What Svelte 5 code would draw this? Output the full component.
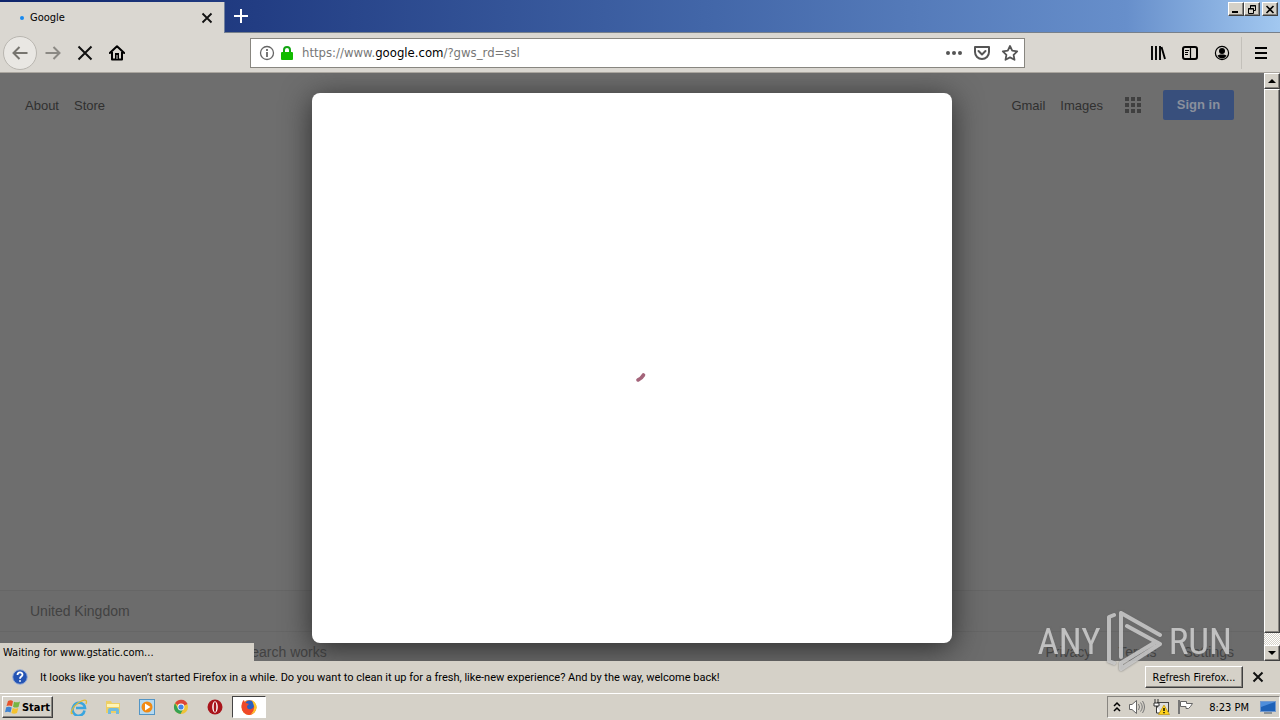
<script>
  const quick = ['Internet Explorer', 'File Explorer', 'Media Player', 'Chrome', 'Opera', 'Firefox'];
  const dots = [0, 1, 2, 3, 4, 5, 6, 7, 8];
</script>

<svelte:head><title>Google</title></svelte:head>

<div class="screen">
  <header class="titlebar">
    <div class="tab">
      <span class="loading"></span>
      <span class="tabname">Google</span>
      <button class="plain close" aria-label="Close tab">
        <svg width="12" height="12" viewBox="0 0 12 12"><path d="M1.5 1.5l9 9M10.500 1.500l-9 9" stroke="#111" stroke-width="1.800" /></svg>
      </button>
    </div>
    <button class="plain newtab" aria-label="New tab">
      <svg width="14" height="14" viewBox="0 0 14 14"><path d="M7 0v14M0 7h14" stroke="#fff" stroke-width="2" /></svg>
    </button>
    <div class="wincontrols">
      <button class="raised win" aria-label="Minimize"><svg width="10" height="9" viewBox="0 0 10 9"><path d="M1 7h6" stroke="#000" stroke-width="2" /></svg></button>
      <button class="raised win" aria-label="Restore"><svg width="10" height="9" viewBox="0 0 10 9"><path d="M3.500 3V.5h5v5H7M3 1h6M1.500 3.500h5v5h-5zM1 4h6" fill="none" stroke="#000" /></svg></button>
      <button class="raised win last" aria-label="Close"><svg width="10" height="9" viewBox="0 0 10 9"><path d="M1.500 1l7 7M8.500 1l-7 7" stroke="#000" stroke-width="1.600" /></svg></button>
    </div>
  </header>

  <nav class="toolbar" aria-label="Browser">
    <div class="navbuttons">
      <button class="plain back" aria-label="Back"><svg width="16" height="16" viewBox="0 0 16 16"><path d="M15.500 8H1.500M7.500 2L1.500 8l6 6" fill="none" stroke="#77756f" stroke-width="2" /></svg></button>
      <button class="plain tool" aria-label="Forward"><svg width="16" height="16" viewBox="0 0 16 16"><path d="M.5 8h14M8.500 2l6 6-6 6" fill="none" stroke="#8b8984" stroke-width="2" /></svg></button>
      <button class="plain tool" aria-label="Stop"><svg width="16" height="16" viewBox="0 0 16 16"><path d="M1.500 1.500l13 13M14.500 1.500l-13 13" stroke="#111" stroke-width="2" /></svg></button>
      <button class="plain tool" aria-label="Home"><svg width="16" height="16" viewBox="0 0 16 16"><path d="M.8 8L8 1.200 15.200 8M3 7v7.500h10V7" fill="none" stroke="#000" stroke-width="2" stroke-linejoin="round" stroke-linecap="round" /><path d="M6 8h4v6H6z" /><path d="M8 10v4" stroke="#dbd8d1" stroke-width="1" /></svg></button>
    </div>
    <div class="urlbar">
      <svg width="16" height="16" viewBox="0 0 16 16"><circle cx="8" cy="8" r="6.500" fill="none" stroke="#666" stroke-width="1.300" /><path d="M8 7v5M8 4v2" stroke="#555" stroke-width="1.600" /></svg>
      <svg class="lock" width="14" height="16" viewBox="0 0 14 16"><path d="M4 8V5a3 3 0 016 0v3" fill="none" stroke="#12a512" stroke-width="2" /><rect x="1" y="7" width="12" height="8" rx="1" fill="#12bc00" /></svg>
      <div class="url" role="textbox" aria-label="Address" tabindex="0" contenteditable="true">https://www.<b>google.com</b>/?gws_rd=ssl</div>
      <button class="plain" aria-label="Page actions"><svg width="18" height="18" viewBox="0 0 18 18" fill="#555"><circle cx="3" cy="9" r="2" /><circle cx="9" cy="9" r="2" /><circle cx="15" cy="9" r="2" /></svg></button>
      <button class="plain" aria-label="Save to Pocket"><svg width="18" height="18" viewBox="0 0 18 18" fill="none" stroke="#555" stroke-width="2" stroke-linejoin="round" stroke-linecap="round"><path d="M2 3h14v5a7 7 0 01-14 0z" /><path d="M5.500 7L9 10.500 12.500 7" /></svg></button>
      <button class="plain" aria-label="Bookmark"><svg width="18" height="18" viewBox="0 0 18 18"><path d="M9 2l2.200 4.600 5 .7-3.600 3.500.9 5L9 13.400l-4.500 2.400.9-5L1.800 7.300l5-.7z" fill="none" stroke="#555" stroke-width="1.800" stroke-linejoin="round" /></svg></button>
    </div>
    <div class="rightbuttons">
      <button class="plain tool" aria-label="Library"><svg width="16" height="16" viewBox="0 0 16 16"><path d="M2 1v14M6 1v14M10 1v14M11.500 2l3.500 12" stroke="#000" stroke-width="1.900" /></svg></button>
      <button class="plain tool" aria-label="Sidebar"><svg width="16" height="16" viewBox="0 0 16 16"><rect x="1" y="2" width="14" height="12" rx="2" fill="none" stroke="#000" stroke-width="2" /><path d="M8.500 2v12" stroke="#000" stroke-width="1.200" /><path d="M3 5.500h4M3 7.500h3M3 9.500h3" stroke="#000" /></svg></button>
      <button class="plain tool" aria-label="Account"><svg width="16" height="16" viewBox="0 0 16 16"><circle cx="8" cy="8" r="6.600" fill="none" stroke="#000" stroke-width="1.200" /><circle cx="8" cy="6" r="3" /><path d="M3.500 10.500c1-1.500 8-1.500 9 0-1 2-2.500 3-4.500 3s-3.500-1-4.500-3z" /></svg></button>
      <span class="divider"></span>
      <button class="plain tool" aria-label="Menu"><svg width="14" height="14" viewBox="0 0 14 14"><path d="M1 2h12M1 7h12M1 12h12" stroke="#000" stroke-width="2" /></svg></button>
    </div>
  </nav>

  <div class="viewport">
    <main class="page">
      <div class="top">
        <a href="#about">About</a>
        <a href="#store">Store</a>
        <span class="grow"></span>
        <a href="#gmail">Gmail</a>
        <a href="#images">Images</a>
        <button class="plain apps" aria-label="Google apps">{#each dots as d (d)}<i></i>{/each}</button>
        <a class="signin" href="#signin">Sign in</a>
      </div>
      <footer>
        <div class="country">United Kingdom</div>
        <div class="links">
          <a class="how" href="#how">How Search works</a>
          <span class="grow"></span>
          <a href="#privacy">Privacy</a>
          <a href="#terms">Terms</a>
          <a href="#settings">Settings</a>
        </div>
      </footer>
      <div class="dialog" role="dialog" aria-label="Loading">
        <svg width="12" height="12" viewBox="0 0 12 12"><path d="M3 9Q6.500 7.500 8.500 4" fill="none" stroke="#a4647a" stroke-width="3.600" stroke-linecap="round" /></svg>
      </div>
      <div class="status">Waiting for www.gstatic.com...</div>
    </main>
    <div class="scrollbar">
      <button class="raised arrow" aria-label="Scroll up"><svg width="8" height="4" viewBox="0 0 8 4"><path d="M0 4l4-4 4 4z" /></svg></button>
      <div class="raised thumb"></div>
      <div class="track"></div>
      <button class="raised arrow" aria-label="Scroll down"><svg width="8" height="4" viewBox="0 0 8 4"><path d="M0 0h8L4 4z" /></svg></button>
    </div>
    <div class="watermark">
      <span>ANY</span>
      <svg width="56" height="64" viewBox="0 0 56 64" fill="none" stroke="#d2d2d2" stroke-opacity=".8" stroke-width="4" stroke-linejoin="round" stroke-linecap="round"><path d="M7 6L2 8v44l5 2M53 26L14 4v44M20 17l33 18L14 60v-6l33-20" /></svg>
      <span>RUN</span>
    </div>
  </div>

  <aside class="notice">
    <svg width="16" height="16" viewBox="0 0 16 16"><circle cx="8" cy="8" r="7.300" fill="#2454b4" stroke="#9aaed6" /><path d="M5.500 6c0-3.500 5-3.300 5-.3 0 2-2.500 1.800-2.500 4M8 11.200v1.600" fill="none" stroke="#fff" stroke-width="1.800" /></svg>
    <p>It looks like you haven’t started Firefox in a while. Do you want to clean it up for a fresh, like-new experience? And by the way, welcome back!</p>
    <button class="raised refresh">R<u>e</u>fresh Firefox...</button>
    <button class="plain close" aria-label="Dismiss"><svg width="12" height="12" viewBox="0 0 12 12"><path d="M1.500 1.500l9 9M10.500 1.500l-9 9" stroke="#111" stroke-width="2" /></svg></button>
  </aside>

  <footer class="taskbar">
    <button class="raised start">
      <svg width="16" height="16" viewBox="0 0 16 16"><path d="M3 2q3-1.500 5 .3L7 7.300Q4.500 6 1.500 7z" fill="#e6532b" /><path d="M9 2.700q3 1.400 6-.2L13.500 8q-3 1.300-5.500-.3z" fill="#77b543" /><path d="M1.200 8.200q3-1.200 5.500.3l-1.200 5Q3 12 0 13.200z" fill="#3f83d2" /><path d="M7.700 9q3 1.300 5.600 0L12 14q-3 1.300-5.600 0z" fill="#f5c22e" /></svg>Start
    </button>
    <div class="quick">
      {#each quick as name, i (name)}
        <button class="plain launch" class:active={i === 5} aria-label={name}>
          <svg width="18" height="18" viewBox="0 0 18 18">
            {#if i === 0}
              <path d="M14.500 12.500A6 6 0 113.500 8.500 6 6 0 0115 10H6" fill="none" stroke="#39a5df" stroke-width="2.600" /><path d="M3 15C-1 18 2 9 8 5s10-4 8 1" fill="none" stroke="#e1bb37" stroke-width="1.300" />
            {:else if i === 1}
              <path d="M2 3h5l1 2h8v10H2z" fill="#edcf65" /><path d="M3 6h12v3H3z" fill="#fff4b5" /><path d="M4 16v-4q0-2 2-2h7q2 0 2 2v4h-3v-3H7v3z" fill="#72bbde" />
            {:else if i === 2}
              <rect x="1.500" y="1.500" width="15" height="15" fill="#b5d9f0" stroke="#5395c5" /><circle cx="9" cy="9" r="5.500" fill="#f18a13" /><path d="M7 5.500v7L12.500 9z" fill="#fff" />
            {:else if i === 3}
              <circle cx="9" cy="9" r="7" fill="#efc338" /><path d="M9 9L3 5.300A7 7 0 0115.500 6z" fill="#dc4638" /><path d="M3 5.300A7 7 0 008.500 16l3-5.500H6z" fill="#35a252" /><path d="M9 6h6.500L9 6z" fill="#dc4638" /><circle cx="9" cy="9" r="3.400" fill="#fff" /><circle cx="9" cy="9" r="2.600" fill="#4384e6" />
            {:else if i === 4}
              <circle cx="9" cy="9" r="7.500" fill="#a9141b" /><ellipse cx="9" cy="9" rx="2.800" ry="5.800" fill="#fff" /><ellipse cx="9" cy="9" rx="1.300" ry="5" fill="#a9141b" />
            {:else}
              <circle cx="9" cy="9.500" r="7.500" fill="#f07b1d" /><circle cx="9.500" cy="7.500" r="5" fill="#2b5fc0" /><path d="M1.500 8Q2 3 4 2q0 2 2 3l3 1-2 2q0 4 4 3 3-1 3-4 2 1 1.500 4-1 5-6.500 6-7-1-7.500-9z" fill="#ef4828" /><path d="M12 2q5 3 4.500 8-1 5-5.500 6 4-4 3-8z" fill="#ffc52b" />
            {/if}
          </svg>
        </button>
      {/each}
    </div>
    <div class="tray">
      <svg width="8" height="12" viewBox="0 0 8 12"><path d="M1 5l3-3 3 3M1 10l3-3 3 3" fill="none" stroke="#000" stroke-width="1.500" /></svg>
      <svg width="18" height="16" viewBox="0 0 18 16"><path d="M1.500 5.500H4L8.500 1.500v13L4 10.500H1.500z" fill="#fff" stroke="#666" /><path d="M10.500 5q2 3 0 6M12.500 3.500q3.500 4.500 0 9M14.500 2q4 6 0 12" fill="none" stroke="#777" /></svg>
      <svg width="17" height="16" viewBox="0 0 17 16"><rect x="4.500" y="3.500" width="11" height="9" fill="#ddd" stroke="#444" /><path d="M2 0v4M5 0v4M1 4h5v3H1zM3.500 7v7H8" fill="#fff" stroke="#333" /><path d="M11 6l5.500 9.500h-11z" fill="#ffd21a" stroke="#b58a00" stroke-width=".6" /><path d="M11 9v3M11 13v1.300" stroke="#000" stroke-width="1.400" /></svg>
      <svg width="17" height="16" viewBox="0 0 17 16"><path d="M2 1v14" stroke="#777" stroke-width="2" /><path d="M3.500 2.500h6v2h6l-2 3-2 2H9v-2H3.500z" fill="#fff" stroke="#666" /></svg>
      <time>8:23 PM</time>
      <svg width="16" height="14" viewBox="0 0 16 14"><rect x=".5" y="1.500" width="15" height="10" fill="#1f62b8" stroke="#7399ce" /><path d="M1 2h14L1 7z" fill="#4f8edb" /><path d="M4 13h8" stroke="#456" /></svg>
    </div>
  </footer>
</div>

<style>
  :global(body) { margin: 0; }
  * { box-sizing: border-box; }
  svg { display: block; flex: none; }
  .screen { display: flex; flex-direction: column; min-height: 100vh; background: #d5d1c8; color: #000; font-family: "DejaVu Sans Condensed", "DejaVu Sans", sans-serif; font-size: 11px; }
  button { font: inherit; color: inherit; }
  a { color: inherit; text-decoration: none; }
  .plain { display: flex; align-items: center; justify-content: center; padding: 0; border: 0; background: none; }
  .raised { display: flex; align-items: center; justify-content: center; padding: 0; background: #d5d1c8; border: 1px solid; border-color: #fff #404040 #404040 #fff; box-shadow: inset -1px -1px #888580; }
  .grow { flex: 1; }

  .titlebar { display: flex; align-items: stretch; height: 33px; background: linear-gradient(90deg, #0e246b, #223d83 20%, #4266a8 55%, #678fcb 88%, #a2c8f0); border-bottom: 1px solid #77808b; }
  .tab { display: flex; align-items: center; width: 225px; margin-top: 2px; padding: 0 11px 0 20px; gap: 6px; background: #dad7d1; border-right: 1px solid #70809d; margin-bottom: -1px; }
  .loading { width: 4px; height: 4px; border-radius: 50%; background: #1688f0; }
  .tabname { flex: 1; }
  .newtab { width: 32px; }
  .wincontrols { display: flex; margin-left: auto; padding: 2px 2px 0 0; }
  .win { width: 16px; height: 14px; }
  .last { margin-left: 2px; }

  .toolbar { display: flex; align-items: center; height: 40px; background: #dad7d1; border-bottom: 1px solid #aaa69f; }
  .navbuttons { display: flex; align-items: center; width: 250px; padding-left: 3px; }
  .back { width: 34px; height: 34px; border: 1px solid #b9b6b0; border-radius: 50%; background: #e9e7e3; }
  .tool { width: 32px; height: 32px; }
  .urlbar { display: flex; align-items: center; flex: 1; height: 30px; padding: 0 0 0 8px; background: #fff; border: 1px solid #888680; }
  .urlbar button { width: 28px; }
  .lock { margin-left: 5px; }
  .url { flex: 1; padding-left: 8px; color: #777; font-size: 13px; white-space: nowrap; }
  .url b { color: #000; font-weight: 400; }
  .rightbuttons { display: flex; align-items: center; justify-content: flex-end; width: 255px; padding-right: 3px; }
  .divider { width: 1px; height: 32px; margin: 0 3px; background: #c3c0ba; }

  .viewport { position: relative; display: flex; flex: 1; }
  .page { position: relative; display: flex; flex: 1; flex-direction: column; justify-content: space-between; background: #6e6e6e; color: #303030; font-family: "Liberation Sans", Arial, sans-serif; overflow: hidden; }
  .top { display: flex; align-items: center; gap: 15px; padding: 17px 30px 0 25px; font-size: 13px; }
  .apps { display: grid; grid-template-columns: repeat(3, 4px); gap: 2px; width: 16px; margin: 0 7px; }
  .apps i { width: 4px; height: 4px; background: #404040; }
  .signin { width: 71px; border-radius: 2px; background: #384f7c; color: #8a909c; font-weight: 700; line-height: 30px; text-align: center; }
  .page footer { font-size: 14px; color: #424242; }
  .country { padding-left: 30px; border-top: 1px solid #666; line-height: 40px; background: #6c6c6c; }
  .links { display: flex; gap: 27px; height: 30px; padding: 0 30px 0 210px; border-top: 1px solid #666; background: #6c6c6c; line-height: 40px; }
  .dialog { position: absolute; inset: 20px 0 18px; width: 640px; margin: 0 auto; display: flex; align-items: center; justify-content: center; padding: 18px 0 0 18px; border-radius: 8px; background: #fff; box-shadow: 0 5px 30px #2c2c2c; }
  .status { position: absolute; left: 0; bottom: 0; width: 254px; padding: 2px 0 0 3px; background: #d5d1c8; color: #000; font-family: "DejaVu Sans Condensed", "DejaVu Sans", sans-serif; font-size: 11px; line-height: 16px; }
  .scrollbar { display: flex; flex-direction: column; width: 16px; background: #e9e6df; }
  .arrow { height: 16px; }
  .thumb { flex: 1; }
  .track { height: 12px; background: repeating-conic-gradient(#fff 0 25%, #d5d1c8 0 50%) 0 0 / 2px 2px; }
  .watermark { position: absolute; z-index: 1; right: 48px; bottom: -12px; display: flex; align-items: center; gap: 6px; color: rgba(215, 215, 215, .8); font-family: "Liberation Sans Narrow", "Roboto Condensed", sans-serif; font-size: 37px; pointer-events: none; filter: drop-shadow(0 0 1px #666); }

  .notice { display: flex; align-items: center; height: 32px; padding: 0 16px 0 12px; gap: 12px; }
  .notice p { flex: 1; margin: 0; font-family: Roboto, sans-serif; white-space: nowrap; }
  .refresh { width: 98px; height: 22px; }
  .notice .close { margin-left: -3px; }
  .taskbar { display: flex; align-items: center; height: 27px; border-top: 1px solid #fff; }
  .start { width: 51px; height: 22px; margin-left: 2px; gap: 1px; font-weight: 700; }
  .quick { display: flex; margin-left: 9px; }
  .launch { width: 34px; height: 22px; }
  .active { border: 1px solid; border-color: #444 #fff #fff #444; background: #fff; }
  .tray { display: flex; align-items: center; height: 22px; margin-left: auto; padding: 0 3px 0 5px; gap: 7px; border: 1px solid; border-color: #888580 #fff #fff #888580; }
  time { margin: 0 4px 0 8px; }
</style>
